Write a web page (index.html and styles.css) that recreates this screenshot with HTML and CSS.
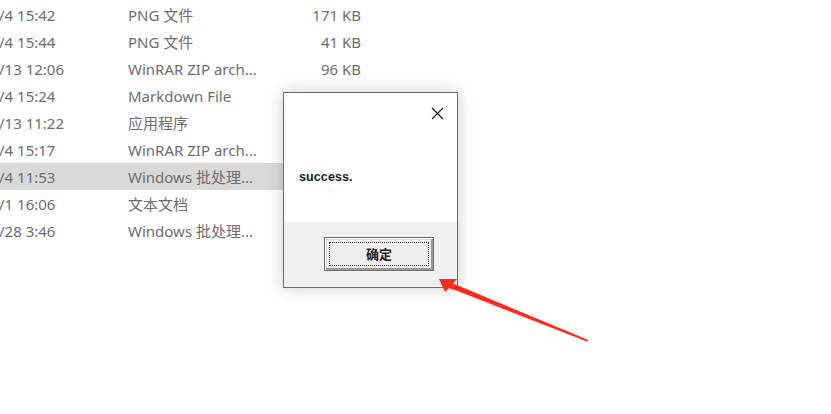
FILE: index.html
```html
<!DOCTYPE html>
<html lang="zh-CN">
<head>
<meta charset="utf-8">
<title>success</title>
<link rel="stylesheet" href="styles.css">
</head>
<body>
<div class="files">
  <div class="row"><span class="date">/4 15:42</span><span class="type">PNG 文件</span><span class="size">171 KB</span></div>
  <div class="row"><span class="date">/4 15:44</span><span class="type">PNG 文件</span><span class="size">41 KB</span></div>
  <div class="row"><span class="date">/13 12:06</span><span class="type">WinRAR ZIP arch...</span><span class="size">96 KB</span></div>
  <div class="row"><span class="date">/4 15:24</span><span class="type">Markdown File</span><span class="size">1 KB</span></div>
  <div class="row"><span class="date">/13 11:22</span><span class="type">应用程序</span><span class="size">712,826 KB</span></div>
  <div class="row"><span class="date">/4 15:17</span><span class="type">WinRAR ZIP arch...</span><span class="size">512,446 KB</span></div>
  <div class="row selected"><span class="date">/4 11:53</span><span class="type">Windows 批处理...</span><span class="size"></span></div>
  <div class="row"><span class="date">/1 16:06</span><span class="type">文本文档</span><span class="size"></span></div>
  <div class="row"><span class="date">/28 3:46</span><span class="type">Windows 批处理...</span><span class="size"></span></div>
</div>

<div class="dialog">
  <div class="dialog-body">
    <div class="titlebar">
      <svg class="close" width="13" height="13" viewBox="0 0 13 13"><path d="M1 1 L12 12 M12 1 L1 12" stroke="#111" stroke-width="1.1" fill="none"/></svg>
    </div>
    <div class="message">success.</div>
  </div>
  <div class="dialog-foot">
    <button class="ok"><span class="focus">确定</span></button>
  </div>
</div>

<svg class="arrow" width="831" height="414" viewBox="0 0 831 414">
  <path d="M588.5 340 L452 283 L450 288 L587 341.5 Z" fill="#ff2a1a"/>
  <path d="M439 279 L457 279 L451 286 L454 290 L449 288 L445 292 Z" fill="#ff2a1a"/>
</svg>
</body>
</html>
```

FILE: styles.css
```css
html, body {
  margin: 0;
  padding: 0;
  background: #ffffff;
  width: 831px;
  height: 414px;
  overflow: hidden;
}

body {
  position: relative;
  font-family: "Noto Sans", "Noto Sans CJK SC", sans-serif;
}

.files {
  padding-top: 1px;
  display: flex;
  flex-direction: column;
}

.row {
  display: flex;
  align-items: center;
  height: 27px;
  font-size: 15px;
  color: #6d6d6d;
  white-space: nowrap;
}

.row.selected {
  background: #d9d9d9;
  width: 290px;
}

.date {
  width: 129px;
  margin-left: -1px;
  flex: none;
}

.type {
  width: 150px;
  flex: none;
}

.size {
  width: 83px;
  text-align: right;
  flex: none;
  display: flex;
  justify-content: flex-end;
  overflow: visible;
}

.dialog {
  position: absolute;
  left: 283px;
  top: 92px;
  width: 175px;
  height: 196px;
  box-sizing: border-box;
  border: 1px solid #6a6a6a;
  background: #ffffff;
  box-shadow: 0 0 16px rgba(0, 0, 0, 0.2);
  display: flex;
  flex-direction: column;
}

.dialog-body {
  height: 129px;
  background: #ffffff;
  display: flex;
  flex-direction: column;
}

.titlebar {
  height: 40px;
  display: flex;
  justify-content: flex-end;
  align-items: flex-start;
  padding: 14px 13px 0 0;
  box-sizing: border-box;
}

.message {
  margin-top: 37px;
  padding-left: 15px;
  font-family: "Liberation Sans", "DejaVu Sans", sans-serif;
  font-weight: bold;
  font-size: 12.5px;
  color: #1a1a1a;
  letter-spacing: 0.1px;
}

.dialog-foot {
  flex: 1;
  background: #f0f0f0;
  padding: 15px 0 0 40px;
}

.ok {
  width: 110px;
  height: 34px;
  margin: 0;
  padding: 4px;
  box-sizing: border-box;
  background: #efefef;
  border: 1px solid #6e6e6e;
  box-shadow: inset 1px 1px 0 #ffffff, inset -2px -2px 0 #9a9a9a, inset 2px 2px 0 #dcdcdc;
  display: flex;
  font-family: "Noto Sans CJK SC", sans-serif;
  font-size: 13px;
  font-weight: bold;
  color: #222222;
}

.focus {
  flex: 1;
  border: 1px dotted #333333;
  display: flex;
  align-items: center;
  justify-content: center;
  line-height: 1;
  padding-bottom: 1px;
}

.arrow {
  position: absolute;
  left: 0;
  top: 0;
  pointer-events: none;
}
```
